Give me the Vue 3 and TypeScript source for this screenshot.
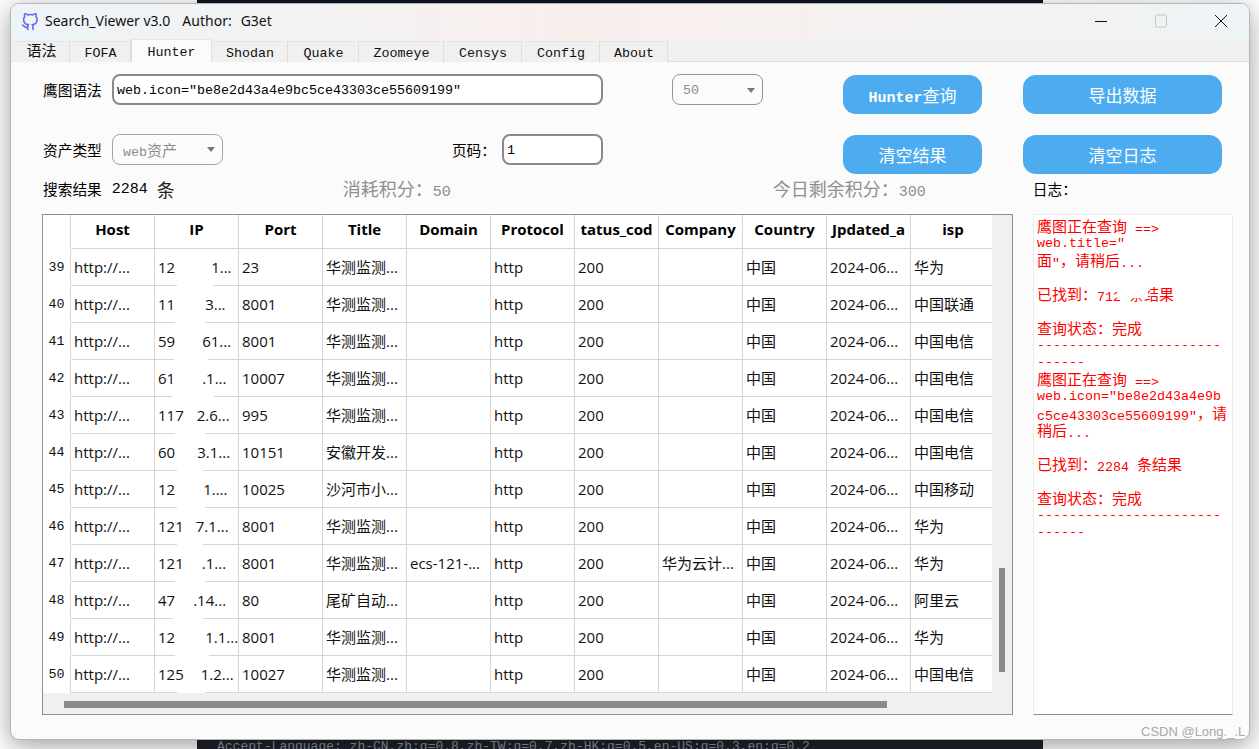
<script setup lang="ts">
interface Row {
  n: number; a: string; gap: number; b: string; nickL: number; nickW: number;
  port: string; title: string; domain: string; company: string; isp: string;
}
interface Tab { name: string; w: number; }
const tabs: Tab[] = [
  { name: '语法', w: 57 }, { name: 'FOFA', w: 61 }, { name: 'Hunter', w: 81 }, { name: 'Shodan', w: 76 },
  { name: 'Quake', w: 71 }, { name: 'Zoomeye', w: 85 }, { name: 'Censys', w: 78 }, { name: 'Config', w: 78 }, { name: 'About', w: 68 },
];
const heads: string[] = ['Host', 'IP', 'Port', 'Title', 'Domain', 'Protocol', 'tatus_cod', 'Company', 'Country', 'Jpdated_a', 'isp'];
const T = '华测监测...';
const rows: Row[] = [
  { n: 39, a: '12', gap: 36, b: '1...', nickL: 22, nickW: 36, port: '23', title: T, domain: '', company: '', isp: '华为' },
  { n: 40, a: '11', gap: 30, b: '3...', nickL: 20, nickW: 30, port: '8001', title: T, domain: '', company: '', isp: '中国联通' },
  { n: 41, a: '59', gap: 27, b: '61...', nickL: 19, nickW: 34, port: '8001', title: T, domain: '', company: '', isp: '中国电信' },
  { n: 42, a: '61', gap: 27, b: '.1...', nickL: 17, nickW: 42, port: '10007', title: T, domain: '', company: '', isp: '中国电信' },
  { n: 43, a: '117', gap: 13, b: '2.6...', nickL: 20, nickW: 30, port: '995', title: T, domain: '', company: '', isp: '中国电信' },
  { n: 44, a: '60', gap: 22, b: '3.1...', nickL: 22, nickW: 26, port: '10151', title: '安徽开发...', domain: '', company: '', isp: '中国电信' },
  { n: 45, a: '12', gap: 28, b: '1....', nickL: 22, nickW: 28, port: '10025', title: '沙河市小...', domain: '', company: '', isp: '中国移动' },
  { n: 46, a: '121', gap: 12, b: '7.1...', nickL: 22, nickW: 26, port: '8001', title: T, domain: '', company: '', isp: '华为' },
  { n: 47, a: '121', gap: 18, b: '.1...', nickL: 20, nickW: 30, port: '8001', title: T, domain: 'ecs-121-...', company: '华为云计...', isp: '华为' },
  { n: 48, a: '47', gap: 18, b: '.14...', nickL: 18, nickW: 30, port: '80', title: '尾矿自动...', domain: '', company: '', isp: '阿里云' },
  { n: 49, a: '12', gap: 30, b: '1.1...', nickL: 20, nickW: 34, port: '8001', title: T, domain: '', company: '', isp: '华为' },
  { n: 50, a: '125', gap: 17, b: '1.2...', nickL: 22, nickW: 28, port: '10027', title: T, domain: '', company: '', isp: '中国电信' },
];
</script>

<template>
  <div class="desk">
    <div class="strip strip-top"></div>
    <div class="strip strip-bottom">Accept-Language: zh-CN,zh;q=0.8,zh-TW;q=0.7,zh-HK;q=0.5,en-US;q=0.3,en;q=0.2</div>

    <div class="window">
      <header class="titlebar">
        <svg class="logo" viewBox="0 0 24 24" width="18" height="18" fill="none" stroke="#6a6df0" stroke-width="2.2" stroke-linecap="round" stroke-linejoin="round">
          <path d="M9 19c-5 1.5-5-2.5-7-3m14 6v-3.87a3.37 3.37 0 0 0-.94-2.61c3.14-.35 6.44-1.54 6.44-7A5.44 5.44 0 0 0 20 4.77 5.07 5.07 0 0 0 19.91 1S18.73.65 16 2.48a13.38 13.38 0 0 0-7 0C6.27.65 5.09 1 5.09 1A5.07 5.07 0 0 0 5 4.77a5.44 5.44 0 0 0-1.5 3.78c0 5.42 3.3 6.61 6.44 7A3.37 3.37 0 0 0 9 18.13V22" />
        </svg>
        <span class="title-a">Search_Viewer v3.0</span>
        <span class="title-b">Author:</span>
        <span class="title-c">G3et</span>
        <div class="winctl">
          <svg width="14" height="14" viewBox="0 0 14 14"><path d="M1 7.5h12" stroke="#111" stroke-width="1" /></svg>
          <svg width="14" height="14" viewBox="0 0 14 14"><rect x="1.5" y="1" width="11" height="12" rx="1.5" fill="none" stroke="#c4c4c4" /></svg>
          <svg width="14" height="14" viewBox="0 0 14 14"><path d="M1 1l12 12M13 1L1 13" stroke="#111" stroke-width="1" /></svg>
        </div>
      </header>

      <nav class="tabs">
        <div
          v-for="t in tabs"
          :key="t.name"
          class="tab"
          :class="{ active: t.name === 'Hunter', cjk: t.name === '语法' }"
          :style="{ width: t.w + 'px' }"
        >{{ t.name }}</div>
      </nav>

      <main class="pane">
        <section class="controls">
          <div class="label">鹰图语法</div>
          <div class="field">web.icon="be8e2d43a4e9bc5ce43303ce55609199"</div>
          <div></div>
          <div class="combo combo-dark"><span>50</span><i class="arrow"></i></div>
          <div></div>
          <button class="btn"><span class="lat">Hunter</span>查询</button>
          <div></div>
          <button class="btn">导出数据</button>

          <div class="label">资产类型</div>
          <div class="second">
            <div class="combo combo-web"><span><span class="lat-sm">web</span>资产</span><i class="arrow"></i></div>
            <div class="page-label">页码：</div>
            <div class="field field-page">1</div>
          </div>
          <div></div>
          <div></div>
          <div></div>
          <button class="btn">清空结果</button>
          <div></div>
          <button class="btn">清空日志</button>
        </section>

        <section class="stats">
          <span class="label s1">搜索结果</span>
          <span class="count">2284</span>
          <span class="big tiao">条</span>
          <span class="grey g1"><span class="big">消耗积分：</span>50</span>
          <span class="grey g2"><span class="big">今日剩余积分：</span>300</span>
          <span class="label s2">日志：</span>
        </section>

        <section class="content">
          <div class="table-box">
            <div class="table-top">
              <div class="table-clip">
                <table>
                  <thead>
                    <tr>
                      <th class="rn"></th>
                      <th v-for="h in heads" :key="h">{{ h }}</th>
                    </tr>
                  </thead>
                  <tbody>
                    <tr v-for="r in rows" :key="r.n">
                      <td class="rn">{{ r.n }}</td>
                      <td>http://...</td>
                      <td class="ip">
                        <span>{{ r.a }}</span><span :style="{ paddingLeft: r.gap + 'px' }">{{ r.b }}</span>
                        <i class="nick" :style="{ left: r.nickL + 'px', width: r.nickW + 'px' }"></i>
                      </td>
                      <td>{{ r.port }}</td>
                      <td>{{ r.title }}</td>
                      <td>{{ r.domain }}</td>
                      <td>http</td>
                      <td>200</td>
                      <td>{{ r.company }}</td>
                      <td>中国</td>
                      <td>2024-06...</td>
                      <td class="last">{{ r.isp }}</td>
                    </tr>
                  </tbody>
                </table>
              </div>
              <div class="vscroll"><div class="vthumb"></div></div>
            </div>
            <div class="hscroll"><div class="hthumb"></div></div>
          </div>

          <aside class="log">
            <div class="ln"><span class="z">鹰图正在查询</span> ==&gt;</div>
            <div class="ln">web.title="华测监测<i class="blot b1"></i></div>
            <div class="ln"><span class="z">面</span>"<span class="z">，请稍后</span>...</div>
            <div class="ln"></div>
            <div class="ln"><span class="z">已找到：</span>712 <span class="z">条结果</span><i class="blot b2"></i></div>
            <div class="ln"></div>
            <div class="ln"><span class="z">查询状态：完成</span></div>
            <div class="ln">-----------------------</div>
            <div class="ln">------</div>
            <div class="ln"><span class="z">鹰图正在查询</span> ==&gt;</div>
            <div class="ln">web.icon="be8e2d43a4e9b</div>
            <div class="ln">c5ce43303ce55609199"<span class="z">，请</span></div>
            <div class="ln"><span class="z">稍后</span>...</div>
            <div class="ln"></div>
            <div class="ln"><span class="z">已找到：</span>2284 <span class="z">条结果</span></div>
            <div class="ln"></div>
            <div class="ln"><span class="z">查询状态：完成</span></div>
            <div class="ln">-----------------------</div>
            <div class="ln">------</div>
          </aside>
        </section>
      </main>
    </div>

    <div class="watermark">CSDN @Long._.L</div>
  </div>
</template>

<style>
html, body { margin: 0; overflow: hidden; background: #fff; }
</style>

<style scoped>
.desk {
  position: relative;
  width: 1259px;
  height: 749px;
  overflow: hidden;
  background: #fff;
  font-family: "Liberation Mono", "Noto Sans CJK SC", monospace;
  font-size: 13.33px;
  color: #000;
}
.strip { position: absolute; left: 197px; width: 846px; }
.strip-top { top: 0; height: 4px; background: #0d1322; }
.strip-bottom {
  bottom: 0; height: 12px; background: #1f222b; color: #8b94a3;
  padding-left: 20px; box-sizing: border-box; font-size: 13px; line-height: 12px;
  padding-top: 4px; white-space: nowrap; overflow: hidden;
}
.window {
  position: absolute; left: 10px; top: 3px;
  width: 1240px; height: 737px; box-sizing: border-box;
  border: 1px solid #b5b5b5; border-radius: 9px; overflow: hidden;
  background: #fbfbfb;
  box-shadow: 0 6px 26px rgba(0, 0, 0, .38);
}
.titlebar {
  height: 36px; display: flex; align-items: center; padding-left: 10px;
  background: linear-gradient(90deg, #edf4f7 0%, #f8efed 45%, #f6f0ee 60%, #eff4f6 100%);
  font-family: "Noto Sans", "Open Sans", sans-serif; font-size: 14px; color: #111;
}
.titlebar span { margin-bottom: 3px; }
.logo { margin-right: 6px; }
.title-b { margin-left: 12px; }
.title-c { margin-left: 9px; }
.winctl { margin-left: auto; margin-bottom: 2px; display: flex; gap: 46px; padding-right: 21px; }
.winctl svg { display: block; }
.tabs {
  height: 22px; box-sizing: border-box; display: flex; align-items: flex-end;
  padding-left: 2px; background: #f0f0f0; border-bottom: 1px solid #dedede;
}
.tab {
  height: 20px; line-height: 23px; box-sizing: content-box; text-align: center;
  border-top: 1px solid #e6e6e6; white-space: nowrap; box-shadow: inset -1px 0 0 #dedede;
  background: #f0f0f0; margin-bottom: -1px; color: #111;
}
.tab.cjk { font-size: 15px; line-height: 22px; }
.tab.active { background: #fbfbfb; height: 22px; line-height: 25px; box-shadow: inset -1px 0 0 #dedede, inset 1px 0 0 #dedede; }
.pane { padding: 12px 0 0 32px; }
.controls {
  display: grid;
  grid-template-columns: 69px 491px 69px 91px 80px 139px 41px 199px;
  grid-auto-rows: 40px;
  row-gap: 20px;
}
.label { font-family: "Noto Sans CJK SC", sans-serif; font-size: 14.7px; line-height: 31px; white-space: nowrap; }
.field {
  height: 31px; box-sizing: border-box; background: #fff; border: 2px solid #8a8a8a; border-radius: 8px;
  line-height: 29px; padding-left: 3px; white-space: nowrap; overflow: hidden;
}
.field-page { width: 101px; }
.second { display: flex; align-items: flex-start; }
.page-label { margin-left: auto; margin-right: 6px; font-family: "Noto Sans CJK SC", sans-serif; font-size: 14.7px; line-height: 31px; }
.combo {
  height: 31px; box-sizing: border-box; display: flex; align-items: center; justify-content: space-between;
  border: 1px solid #949494; border-radius: 8px; padding: 2px 7px 0 10px; color: #8c8c8c;
}
.combo-web { width: 111px; border-color: #a3a3a3; font-size: 15px; padding-top: 0; }
.lat-sm { font-size: 13.33px; }
.arrow { width: 0; height: 0; border: 4px solid transparent; border-top: 5px solid #777; border-bottom: 0; }
.btn {
  height: 39px; margin-top: 1px; padding: 0; border: 0; border-radius: 13px; background: #4dacef; color: #fff;
  font-family: "Liberation Mono", "Noto Sans CJK SC", monospace; font-size: 17px;
}
.lat { font-size: 15px; font-weight: 700; }
.stats { position: relative; display: flex; height: 20px; align-items: center; margin-top: 5px; white-space: nowrap; }
.stats .label { line-height: 20px; }
.count { margin-left: 10px; width: 45px; font-size: 15px; }
.big { font-family: "Noto Sans CJK SC", sans-serif; font-size: 18px; line-height: 20px; }
.tiao { color: #222; }
.grey { color: #8f8f8f; font-size: 15px; }
.g1 { margin-left: 168px; }
.g2 { margin-left: 322px; }
.s2 { margin-left: 107px; }
.content { display: flex; gap: 20px; margin: 15px 0 0 -1px; }
.table-box {
  width: 971px; height: 501px; box-sizing: border-box; border: 1px solid #8b8f99; background: #f0f0f0;
  display: flex; flex-direction: column;
}
.table-top { display: flex; height: 478px; }
.table-clip { width: 949px; overflow: hidden; background: #fff; }
table {
  table-layout: fixed; width: 952px; border-collapse: separate; border-spacing: 0;
  font-family: "Open Sans", "Noto Sans CJK SC", sans-serif; font-size: 15px; color: #111;
}
th, td {
  width: 84px; box-sizing: border-box; padding: 0 0 1px 3px; border-right: 1px solid #d6d6d6; border-bottom: 1px solid #d6d6d6;
  white-space: nowrap; overflow: hidden; text-align: left; height: 37px; font-weight: 400;
}
th { height: 34px; font-weight: 700; text-align: center; padding: 0 0 6px; color: #000; }
.rn { width: 28px; padding: 0; text-align: center; font-family: "Liberation Mono", monospace; font-size: 13.33px; border-bottom-color: #fff; }
th.rn { border-bottom-color: #fff; }
td.ip { position: relative; overflow: visible; }
.nick { position: absolute; bottom: -1px; height: 1px; background: #fff; }
.last { border-right: 0; }
th:last-child { border-right: 0; }
.vscroll { width: 20px; position: relative; background: #f0f0f0; }
.vthumb { position: absolute; left: 7px; top: 353px; width: 6px; height: 104px; background: #8a8a8a; }
.hscroll { height: 21px; position: relative; background: #f0f0f0; }
.hthumb { position: absolute; left: 21px; top: 8px; width: 823px; height: 7px; background: #8a8a8a; }
.log {
  width: 200px; height: 501px; box-sizing: border-box; background: #fff; border: 1px solid #ececec; border-bottom: 1px solid #8f8f8f;
  padding: 3px 0 0 3px; color: #f00; overflow: hidden;
}
.ln { position: relative; height: 17px; line-height: 17px; white-space: nowrap; }
.z {
  display: inline-block; height: 15px; line-height: 15px; vertical-align: 1px;
  font-family: "Noto Sans CJK SC", sans-serif; font-size: 15px;
}
.blot { position: absolute; background: #fff; }
.b1 { left: 88px; top: -1px; width: 88px; height: 15px; }
.b2 { left: 80px; top: 1px; width: 31px; height: 11px; }
.watermark {
  position: absolute; left: 1141px; top: 724px; font-family: "Liberation Sans", sans-serif; font-size: 13px;
  color: #a9a9a9; white-space: nowrap;
}
</style>
